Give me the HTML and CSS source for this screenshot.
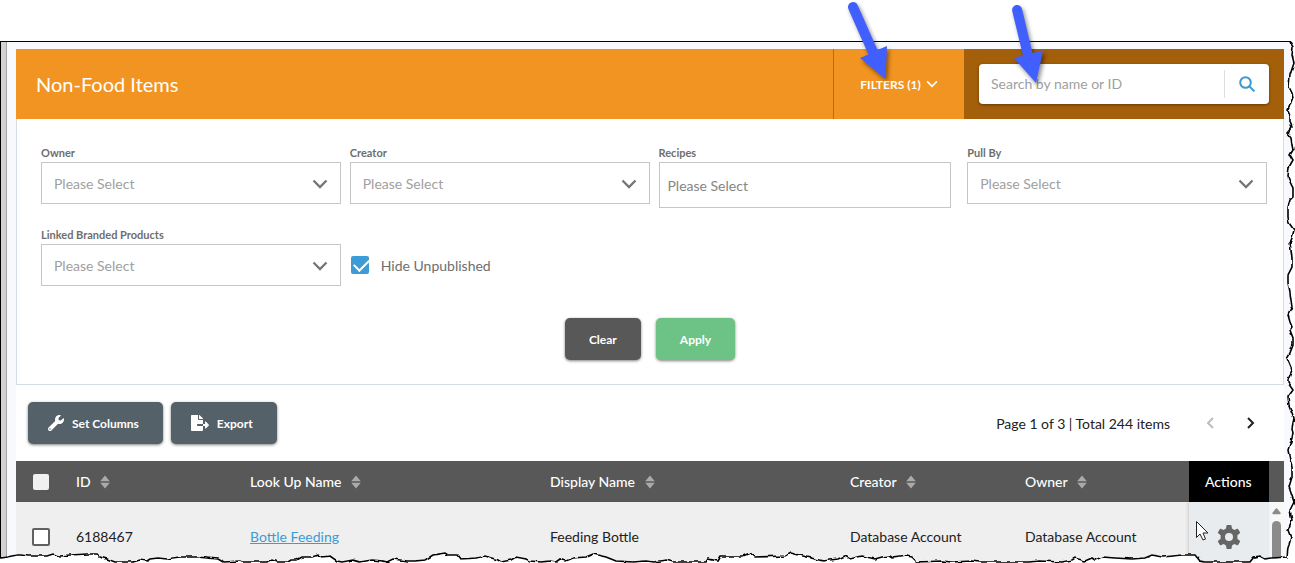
FILE: index.html
```html
<!DOCTYPE html>
<html lang="en">
<head>
    <meta charset="UTF-8">
    <meta name="viewport" content="width=device-width, initial-scale=1.0">
    <title>Non-Food Items</title>
    <link rel="stylesheet" href="styles.css">
</head>
<body>
    <svg class="sprite" aria-hidden="true">
        <symbol id="chevron" viewBox="0 0 16 16">
            <path d="M1.5 4.5 L8 11 L14.5 4.5" fill="none" stroke="currentColor" stroke-width="2.300"/>
        </symbol>
        <symbol id="sort" viewBox="0 0 10 14">
            <path d="M5 .5 L9.8 6.200 H.2 Z M5 13.500 L9.8 7.800 H.2 Z" fill="currentColor"/>
        </symbol>
    </svg>

    <div class="frame">
        <main class="page">
            <header class="header">
                <h1>Non-Food Items</h1>
                <button class="filters-toggle" type="button">
                    FILTERS (1)
                    <svg class="icon-sm"><use href="#chevron"/></svg>
                </button>
                <form class="search">
                    <div class="search-box">
                        <input type="text" placeholder="Search by name or ID" aria-label="Search by name or ID">
                        <button type="button" aria-label="Search">
                            <svg viewBox="0 0 16 16"><circle cx="6.5" cy="6.5" r="5.3"/><path d="M10.4 10.4 L15.4 15.4"/></svg>
                        </button>
                    </div>
                </form>
            </header>

            <form class="filters">
                <div class="fields">
                    <div class="field">
                        <label for="owner">Owner</label>
                        <div class="select">
                            <select id="owner"><option>Please Select</option></select>
                            <svg><use href="#chevron"/></svg>
                        </div>
                    </div>
                    <div class="field">
                        <label for="creator">Creator</label>
                        <div class="select">
                            <select id="creator"><option>Please Select</option></select>
                            <svg><use href="#chevron"/></svg>
                        </div>
                    </div>
                    <div class="field field-recipes">
                        <label for="recipes">Recipes</label>
                        <input type="text" id="recipes" placeholder="Please Select">
                    </div>
                    <div class="field">
                        <label for="pull-by">Pull By</label>
                        <div class="select">
                            <select id="pull-by"><option>Please Select</option></select>
                            <svg><use href="#chevron"/></svg>
                        </div>
                    </div>
                    <div class="field">
                        <label for="linked">Linked Branded Products</label>
                        <div class="select">
                            <select id="linked"><option>Please Select</option></select>
                            <svg><use href="#chevron"/></svg>
                        </div>
                    </div>
                    <label class="hide-unpublished">
                        <input type="checkbox" checked>
                        Hide Unpublished
                    </label>
                </div>
                <div class="filter-buttons">
                    <button class="btn btn-dark" type="reset">Clear</button>
                    <button class="btn btn-green" type="button">Apply</button>
                </div>
            </form>

            <div class="toolbar">
                <button class="btn btn-slate" type="button">
                    <svg viewBox="0 0 512 512" width="16" height="16"><path fill="currentColor" d="M507.7 109.100c-2.200-9-13.500-12.100-20.100-5.500l-74.400 74.400-67.900-11.300L334 98.900l74.400-74.400c6.600-6.600 3.400-17.900-5.700-20.200-47.400-11.700-99.600.9-136.600 37.900-39.600 39.600-50.500 97.100-34.100 147.200L18.700 402.800c-25 25-25 65.500 0 90.500s65.500 25 90.500 0l213.200-213.200c50.100 16.700 107.500 5.700 147.400-34.200 37.100-37.100 49.700-89.300 37.900-136.800zM64 472c-13.300 0-24-10.700-24-24s10.700-24 24-24 24 10.700 24 24-10.700 24-24 24z"/></svg>
                    Set Columns
                </button>
                <button class="btn btn-slate" type="button">
                    <svg viewBox="0 0 576 512" width="18" height="16"><path fill="currentColor" d="M384 121.900c0-6.300-2.500-12.400-7-16.900L279.100 7c-4.500-4.500-10.600-7-17-7H256v128h128zM571 308l-95.700-96.400c-10.100-10.100-27.400-3-27.400 11.300V288h-64v64h64v65.200c0 14.300 17.300 21.400 27.400 11.300L571 332c6.600-6.600 6.600-17.400 0-24zM192 336v-32c0-8.800 7.200-16 16-16h176V160H248c-13.200 0-24-10.800-24-24V0H24C10.700 0 0 10.700 0 24v464c0 13.300 10.700 24 24 24h336c13.300 0 24-10.700 24-24V352H208c-8.800 0-16-7.200-16-16z"/></svg>
                    Export
                </button>
                <div class="pager">
                    <span>Page 1 of 3 | Total 244 items</span>
                    <button type="button" aria-label="Previous page" disabled>
                        <svg viewBox="0 0 12 12"><path d="M9 1 L4 6 L9 11"/></svg>
                    </button>
                    <button type="button" aria-label="Next page">
                        <svg viewBox="0 0 12 12"><path d="M4 1 L9 6 L4 11"/></svg>
                    </button>
                </div>
            </div>

            <div class="grid">
                <table>
                    <colgroup>
                        <col class="col-check"><col class="col-id"><col class="col-name"><col class="col-name">
                        <col class="col-creator"><col><col class="col-actions">
                    </colgroup>
                    <thead>
                        <tr>
                            <th><input type="checkbox" aria-label="Select all"></th>
                            <th>ID <svg class="sort"><use href="#sort"/></svg></th>
                            <th>Look Up Name <svg class="sort"><use href="#sort"/></svg></th>
                            <th>Display Name <svg class="sort"><use href="#sort"/></svg></th>
                            <th>Creator <svg class="sort"><use href="#sort"/></svg></th>
                            <th>Owner <svg class="sort"><use href="#sort"/></svg></th>
                            <th class="actions">Actions</th>
                        </tr>
                    </thead>
                    <tbody>
                        <tr>
                            <td><input type="checkbox" aria-label="Select 6188467"></td>
                            <td>6188467</td>
                            <td><a href="#">Bottle Feeding</a></td>
                            <td>Feeding Bottle</td>
                            <td>Database Account</td>
                            <td>Database Account</td>
                            <td class="actions">
                                <button type="button" aria-label="Row actions">
                                    <svg viewBox="0 0 24 24"><path fill="currentColor" fill-rule="evenodd" d="M9.500 0.600 Q9.600 0 10.200 0 H13.800 Q14.400 0 14.500 .6 L15 3.600 L17.300 4.900 L20.200 3.800 Q20.800 3.600 21.100 4.100 L23 7.300 Q23.300 7.900 22.800 8.300 L20.400 10.300 V13.700 L22.800 15.700 Q23.300 16.100 23 16.700 L21.100 19.900 Q20.800 20.400 20.200 20.200 L17.300 19.100 L15 20.400 L14.500 23.400 Q14.400 24 13.800 24 H10.200 Q9.600 24 9.500 23.400 L9 20.400 L6.700 19.100 L3.800 20.200 Q3.200 20.400 2.900 19.900 L1 16.700 Q.7 16.100 1.200 15.700 L3.600 13.700 V10.300 L1.200 8.300 Q.7 7.900 1 7.300 L2.900 4.100 Q3.200 3.600 3.800 3.800 L6.700 4.900 L9 3.600 Z M12 8 A4 4 0 1 0 12 16 A4 4 0 1 0 12 8 Z"/></svg>
                                </button>
                            </td>
                        </tr>
                    </tbody>
                </table>
                <div class="scrollbar">
                    <svg viewBox="0 0 10 8"><path d="M4 1.500 Q5 .3 6 1.500 L9.500 6 Q10 7.500 8.500 7.500 H1.500 Q0 7.500 .5 6 Z"/></svg>
                    <div class="thumb"></div>
                </div>
            </div>
        </main>
    </div>

    <!-- torn paper edge, arrows and mouse pointer -->
    <svg class="overlay" viewBox="0 0 1295 563" preserveAspectRatio="none" aria-hidden="true">
        <filter id="rough" filterUnits="userSpaceOnUse" x="-10" y="30" width="1320" height="550">
            <feTurbulence type="fractalNoise" baseFrequency="0.15" numOctaves="1" seed="4"/>
            <feDisplacementMap in="SourceGraphic" scale="4" xChannelSelector="R" yChannelSelector="G"/>
        </filter>
        <path class="torn" filter="url(#rough)" d="M1290 42 L1293 47 1292 55 1294 63 1290 75 1289 87 1292 93 1293 97 1290 105 1288 110 1290 115 1290 122 1292 127 1287 133 1291 138 1292 145 1293 150 1290 155 1293 160 1289 167 1288 177 1290 182 1293 188 1293 197 1290 200 1288 207 1288 217 1289 223 1294 230 1292 238 1290 243 1292 257 1292 267 1288 275 1288 283 1290 293 1292 307 1288 315 1290 322 1292 327 1290 330 1293 338 1293 345 1290 353 1287 358 1292 370 1288 380 1288 383 1293 390 1288 397 1289 405 1294 418 1292 428 1293 433 1292 438 1288 450 1290 460 1292 467 1292 477 1289 487 1291 493 1294 502 1290 510 1292 520 1288 530 1291 538 1288 548 1287 557 1272 558 1265 559 1260 556 1254 557 1250 562 1205 562 1200 561 1195 555 1182 555 1172 556 1162 557 1152 555 1145 558 1132 559 1115 558 1102 557 1095 560 1092 558 1085 561 1075 558 1072 560 1062 562 1039 561 1029 562 979 562 972 561 952 562 942 561 917 562 912 557 907 556 892 558 889 556 882 557 875 559 862 556 850 559 845 556 838 559 823 561 803 556 791 553 786 556 755 557 750 553 743 556 721 556 718 561 708 559 706 562 673 562 666 560 653 562 646 561 633 562 616 561 606 557 593 554 586 557 573 558 566 561 560 559 556 562 550 561 540 562 530 561 526 559 516 557 511 560 501 562 498 560 485 556 476 558 461 559 458 555 448 555 445 553 433 555 425 560 415 561 407 561 393 559 387 562 383 561 372 560 360 562 353 560 342 562 337 561 330 556 322 557 318 555 312 557 302 557 297 560 290 560 287 562 277 562 272 560 267 562 242 562 240 561 223 562 218 559 207 558 197 557 180 557 172 558 167 559 158 558 150 559 147 561 140 560 133 562 115 562 107 559 100 557 97 554 87 554 70 555 60 556 53 554 47 556 27 556 21 555 17 555 7 557 0 558 -8 558 V575 H1305 V42"/>
        <g class="arrows">
            <path d="M848.400 9 A5 5 0 0 1 857.600 5 L877.500 50 L887 46 L885.500 79 L860 58 L868.500 54.500 Z"/>
            <path d="M1012.200 11 A5 5 0 0 1 1022 9 L1032.500 53 L1043 50.500 L1036 83 L1014 58 L1023 55.500 Z"/>
        </g>
        <path class="pointer" d="M1196.500 521.500 V537.500 L1200 534 L1203 540 L1205.500 539 L1203 533 H1208 Z"/>
    </svg>
</body>
</html>
```
FILE: styles.css
```css
* {
    box-sizing: border-box;
}

body {
    margin: 0;
    height: 100vh;
    overflow: hidden;
    position: relative;
    padding-top: 41px;
    background: #fff;
    color: #212121;
    font-family: Lato, "Liberation Sans", sans-serif;
    font-size: 14px;
}

button, input, select {
    font-family: inherit;
    font-size: 14px;
}

button {
    border: none;
    background: none;
    padding: 0;
    cursor: pointer;
}

.sprite {
    display: none;
}

.frame {
    display: flex;
    min-height: 100%;
    margin-right: 4px;
    padding: 7px 7px 0 0;
    border-top: 1px solid #000;
    border-left: 1px solid #000;
    background: #f8f9fc;
}

/* window edge on the left */
.frame::before {
    content: "";
    flex: none;
    width: 5px;
    margin: -7px 10px 0 0;
    background: #d6d1d1;
    border-right: 1px solid #a5a3a3;
}

.page {
    flex: 1;
    min-width: 0;
    margin-left: -1px;
    background: #fff;
}

.header {
    display: flex;
    height: 70px;
    background: #f29421;
    color: #fff;
}

.header h1 {
    flex: 1;
    margin: 0;
    padding-left: 20px;
    font-size: 20px;
    font-weight: 400;
    line-height: 70px;
}

.filters-toggle {
    display: flex;
    align-items: center;
    justify-content: center;
    gap: 5px;
    width: 131px;
    border-left: 1px solid #b86c0e;
    color: #fff;
    font-size: 12px;
    font-weight: 700;
}

.icon-sm {
    width: 12px;
    height: 12px;
}

.search {
    width: 320px;
    padding: 15px;
    background: #a35f09;
}

.search-box {
    display: flex;
    align-items: center;
    height: 40px;
    border-radius: 4px;
    background: #fff;
    box-shadow: 0 1px 3px rgba(0, 0, 0, 0.4);
}

.search-box input {
    flex: 1;
    min-width: 0;
    padding: 0 12px 2px;
    border: none;
    background: none;
}

.search-box button {
    width: 45px;
    height: 28px;
    border-left: 1px solid #ddd;
}

.search-box svg {
    display: block;
    width: 16px;
    height: 16px;
    margin: 0 auto;
    fill: none;
    stroke: #3b99d4;
    stroke-width: 2;
}

::placeholder {
    color: #a0a0a0;
    opacity: 1;
}

.filters {
    padding: 27px 16px 24px 24px;
    border: 1px solid #d6dde3;
    border-top: none;
}

.fields {
    display: grid;
    grid-template-columns: repeat(4, 1fr);
    gap: 20px 9px;
}

.field > label {
    display: block;
    margin-bottom: 2px;
    color: #6e6e6e;
    font-size: 11px;
    font-weight: 700;
    line-height: 14px;
}

.select {
    position: relative;
}

.select select {
    display: block;
    width: 100%;
    height: 42px;
    padding: 0 12px;
    border: 1px solid #c6c6c6;
    border-radius: 0;
    background: #fff;
    color: #a0a0a0;
    appearance: none;
}

.select svg {
    position: absolute;
    top: 14px;
    right: 13px;
    width: 16px;
    height: 16px;
    color: #757575;
    pointer-events: none;
}

.field-recipes {
    padding-right: 7px;
}

.field-recipes input {
    display: block;
    width: 100%;
    height: 46px;
    padding: 0 8px;
    border: 1px solid #c6c6c6;
}

.field-recipes ::placeholder {
    color: #858585;
}

.hide-unpublished {
    display: flex;
    align-items: center;
    gap: 12px;
    padding-top: 16px;
    color: #6e6e6e;
}

input[type="checkbox"] {
    display: block;
    width: 18px;
    height: 18px;
    margin: 0;
    border: 2px solid #616161;
    border-radius: 2px;
    background: #fff;
    appearance: none;
}

.hide-unpublished input[type="checkbox"] {
    position: relative;
    margin-left: 1px;
    border: none;
    background: #3d9bd5;
}

.hide-unpublished input::after {
    content: "";
    position: absolute;
    top: 3px;
    left: 3px;
    width: 13px;
    height: 7px;
    border: solid #fff;
    border-width: 0 0 2px 2px;
    transform: rotate(-45deg);
}

.filter-buttons {
    display: flex;
    justify-content: center;
    gap: 15px;
    margin-top: 32px;
    padding-right: 8px;
}

.btn {
    display: flex;
    align-items: center;
    gap: 8px;
    height: 42px;
    padding: 0 24px;
    border-radius: 5px;
    box-shadow: 0 1px 3px rgba(0, 0, 0, 0.5);
    color: #fff;
    font-size: 12px;
    font-weight: 700;
}

.btn-dark {
    background: #585858;
}

.btn-green {
    background: #6dc385;
}

.btn-slate {
    padding: 0 24px 0 20px;
    background: #546169;
}

.toolbar {
    display: flex;
    align-items: center;
    gap: 8px;
    height: 76px;
    padding: 0 14px 0 12px;
}

.pager {
    display: flex;
    align-items: center;
    margin-left: auto;
}

.pager span {
    margin-right: 20px;
}

.pager button {
    width: 40px;
    height: 40px;
    color: #212121;
}

.pager button:disabled {
    color: #bdbdbd;
}

.pager svg {
    display: block;
    width: 12px;
    height: 12px;
    margin: 0 auto;
    fill: none;
    stroke: currentColor;
    stroke-width: 2;
}

.grid {
    display: flex;
    background: linear-gradient(#585858 41px, #f8f8f8 41px);
}

table {
    flex: 1;
    width: 100%;
    border-collapse: collapse;
    table-layout: fixed;
}

.col-check {
    width: 44px;
}

.col-id {
    width: 174px;
}

.col-name {
    width: 300px;
}

.col-creator {
    width: 175px;
}

.col-actions {
    width: 80px;
}

th, td {
    padding: 0 16px;
    text-align: left;
    white-space: nowrap;
}

th {
    height: 41px;
    background: #585858;
    color: #fff;
    font-weight: 500;
}

td {
    height: 66px;
    background: #efefef;
}

th input[type="checkbox"] {
    width: 16px;
    height: 16px;
    margin-left: 1px;
    border: none;
    background: #f0f0f0;
}

td a {
    color: #3d9bd5;
}

.sort {
    width: 10px;
    height: 14px;
    margin-left: 6px;
    color: #aaa;
    vertical-align: -2px;
}

th.actions {
    background: #000;
}

td.actions {
    background: #e8ecef;
    box-shadow: -1px 0 3px rgba(0, 0, 0, 0.15);
}

td.actions button {
    display: block;
    width: 48px;
    color: #666;
}

td.actions svg {
    display: block;
    width: 24px;
    height: 24px;
    margin: 0 auto;
}

.scrollbar {
    flex: none;
    width: 15px;
    padding: 46px 3px 0;
}

.scrollbar svg {
    display: block;
    width: 9px;
    height: 8px;
    fill: #8b8b8b;
}

.thumb {
    width: 9px;
    height: 50px;
    margin-top: 6px;
    border-radius: 5px;
    background: #8b8b8b;
}

.overlay {
    position: absolute;
    top: 0;
    left: 0;
    width: 100%;
    height: 100%;
    pointer-events: none;
}

.torn {
    fill: #fff;
    stroke: #000;
    stroke-width: 1.6;
}

.arrows {
    fill: #415eff;
    filter: drop-shadow(2px 3px 2px rgba(0, 0, 0, 0.45));
}

.pointer {
    fill: #fff;
    stroke: #222;
}
```
